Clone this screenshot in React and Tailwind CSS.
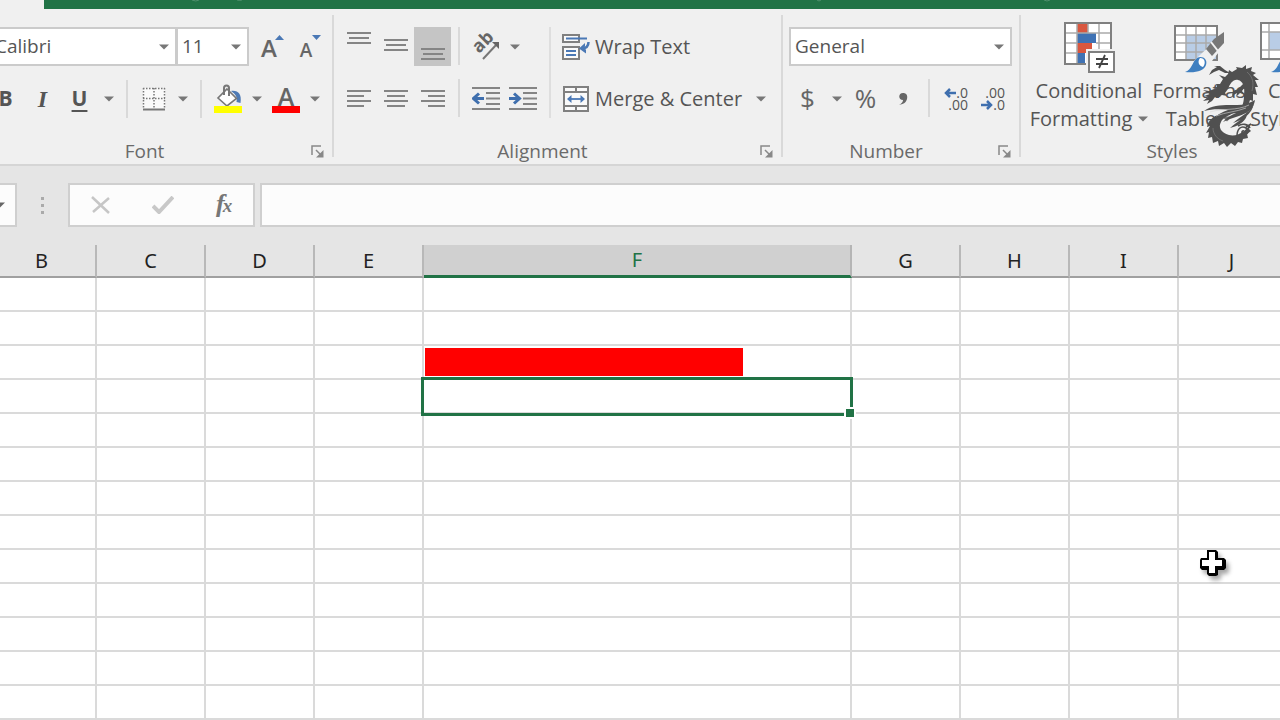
import React from 'react';

const Caret = () => (
  <svg width="10" height="6" viewBox="0 0 10 6" aria-hidden="true">
    <path d="M0 0.5h10L5 5.5z" fill="#777" />
  </svg>
);

const Divider = () => <div className="mx-[7px] h-[38px] w-[2px] shrink-0 bg-[#d9d9d9]" />;

const IconButton = ({ label, active, children }) => (
  <button
    type="button"
    aria-label={label}
    className={`flex h-[39px] w-[37px] shrink-0 items-center justify-center ${active ? 'bg-[#c5c5c5]' : ''}`}
  >
    {children}
  </button>
);

const CaretButton = ({ label }) => (
  <button type="button" aria-label={label} className="flex h-[39px] w-[21px] shrink-0 items-center justify-center">
    <Caret />
  </button>
);

const ComboBox = ({ label, value, className }) => (
  <div className={`relative h-[39px] border-2 border-[#cbcbcb] bg-white ${className}`}>
    <select
      aria-label={label}
      defaultValue={value}
      className="h-full w-full appearance-none bg-transparent pl-1 text-[19px] text-[#555] outline-none"
    >
      <option>{value}</option>
    </select>
    <span className="pointer-events-none absolute inset-y-0 right-[6px] flex items-center">
      <Caret />
    </span>
  </div>
);

const Lines = ({ rows }) => (
  <svg width="26" height="38" viewBox="0 0 26 38" stroke="#858585" strokeWidth="2">
    {rows.map(([x1, x2, y]) => (
      <path key={y} d={`M${x1} ${y}H${x2}`} />
    ))}
  </svg>
);

const verticalAligns = [
  { label: 'Top Align', rows: [[1, 25, 5], [3, 23, 10], [1, 25, 15]] },
  { label: 'Middle Align', rows: [[1, 25, 12], [3, 23, 17], [1, 25, 22]] },
  { label: 'Bottom Align', active: true, rows: [[1, 25, 21], [3, 23, 26], [1, 25, 31]] },
];

const horizontalAligns = [
  { label: 'Align Left', rows: [[1, 25, 11], [1, 18, 16], [1, 25, 21], [1, 18, 26]] },
  { label: 'Center', rows: [[1, 25, 11], [4, 22, 16], [1, 25, 21], [4, 22, 26]] },
  { label: 'Align Right', rows: [[1, 25, 11], [8, 25, 16], [1, 25, 21], [8, 25, 26]] },
];

const Launcher = () => (
  <svg width="13" height="13" viewBox="0 0 13 13" fill="none" stroke="#888" strokeWidth="1.5">
    <path d="M1 10V1h9" />
    <path d="M5 5l5 5" />
    <path d="M12.500 5v7.500H5z" fill="#888" stroke="none" />
  </svg>
);

const Group = ({ title, launcher, className, children }) => (
  <section className={`flex shrink-0 flex-col justify-between pb-px ${className}`}>
    {children}
    <div className="flex h-6 items-center">
      <h2 className="grow text-center text-[19px] leading-6 text-[#6a6a6a]">{title}</h2>
      {launcher && (
        <button type="button" aria-label={`${title} settings`} className="flex w-[30px] justify-center">
          <Launcher />
        </button>
      )}
    </div>
  </section>
);

const GroupDivider = () => <div className="mt-[6px] h-[142px] w-[2px] shrink-0 bg-[#d9d9d9]" />;

const BorderIcon = () => (
  <svg width="24" height="24" viewBox="0 0 24 24" fill="none" stroke="#777">
    <rect x="1" y="1" width="22" height="21" fill="#fafafa" stroke="none" />
    <path d="M1.500 1v21M12 1v21M22.500 1v21M1 1.500h22M1 11.500h22" strokeWidth="1.500" strokeDasharray="1.500 1.500" />
    <path d="M1 22.500h22" strokeWidth="2" />
  </svg>
);

const FillIcon = () => (
  <svg width="28" height="30" viewBox="0 0 28 30">
    <path d="M17 7c7-1 11 3 9.500 12l-4-1c1-5-1-8-5.500-11z" fill="#4f7bb5" />
    <path d="M13 5l9.500 9.500L13 22l-9-8z" fill="#fff" stroke="#777" strokeWidth="1.600" />
    <path d="M10 11V4q0-2.500 2.500-2.500T15 4v8" fill="none" stroke="#777" strokeWidth="2" />
    <rect x="0" y="22" width="28" height="7" fill="#ff0" />
  </svg>
);

const FontColorIcon = () => (
  <svg width="28" height="30" viewBox="0 0 28 30">
    <text x="14" y="22" textAnchor="middle" fontSize="25" fontWeight="600" fill="#666">A</text>
    <rect x="0" y="22" width="28" height="7" fill="red" />
  </svg>
);

const GrowFontIcon = () => (
  <svg width="28" height="28" viewBox="0 0 28 28" className="overflow-visible">
    <text x="11" y="24" textAnchor="middle" fontSize="24" fontWeight="600" fill="#666">A</text>
    <path d="M17 7l4.500-5 4.500 5z" fill="#4a78b5" />
  </svg>
);

const ShrinkFontIcon = () => (
  <svg width="28" height="28" viewBox="0 0 28 28" className="overflow-visible">
    <text x="11" y="24" textAnchor="middle" fontSize="19" fontWeight="600" fill="#666">A</text>
    <path d="M17 2h9l-4.500 5z" fill="#4a78b5" />
  </svg>
);

const OrientationIcon = () => (
  <svg width="30" height="30" viewBox="0 0 30 30" className="overflow-visible">
    <text x="0" y="0" transform="translate(8 22) rotate(-45)" fontSize="18" fontWeight="700" fill="#666">
      ab
    </text>
    <path d="M12 27L26 12" fill="none" stroke="#777" strokeWidth="2" />
    <path d="M21 10h7v7z" fill="#666" />
  </svg>
);

const IndentIcon = ({ increase }) => (
  <svg width="28" height="26" viewBox="0 0 28 26" fill="none">
    <path d="M0 2h28M14 7h14M14 12.500h14M14 18h14M0 23h28" stroke="#858585" strokeWidth="2" />
    <path
      d={increase ? 'M0 12.500h10M5 7.500l5.500 5-5.500 5' : 'M12 12.500H2M7 7.500l-5.500 5 5.500 5'}
      stroke="#3f6fae"
      strokeWidth="3"
    />
  </svg>
);

const WrapIcon = () => (
  <svg width="28" height="28" viewBox="0 0 28 28" fill="none">
    <path d="M1 2h16v7H1zM1 14h16v12H1z" stroke="#808080" strokeWidth="2" fill="#fafafa" />
    <path d="M4 5.500h21M4 18h10M4 22h10" stroke="#4a78b5" strokeWidth="1.800" />
    <path d="M26.500 9c0 5-3 6.500-7 6.500" stroke="#4a78b5" strokeWidth="2.500" />
    <path d="M23 10l-6 5.500 7 5v-4l-3-1 2-2z" fill="#4a78b5" />
  </svg>
);

const MergeIcon = () => (
  <svg width="28" height="28" viewBox="0 0 28 28" fill="none">
    <path d="M2 2h24v24H2zM2 7h24M2 21h24M14 2v5M14 21v5" stroke="#808080" strokeWidth="2" fill="#fafafa" />
    <path d="M6 14h16" stroke="#4a78b5" strokeWidth="1.800" />
    <path d="M9.500 10v8L5 14zM18.500 10v8l4.500-4z" fill="#4a78b5" />
  </svg>
);

const DecimalIcon = ({ increase }) => (
  <svg width="28" height="26" viewBox="0 0 28 26">
    <g fontSize="14" fill="#555">
      <text x="26" y="12" textAnchor="end">{increase ? '.0' : '.00'}</text>
      <text x="26" y="24" textAnchor="end">{increase ? '.00' : '.0'}</text>
    </g>
    <path
      d={increase ? 'M14 7H4M8 3L4 7l4 4' : 'M2 19h10M8 15l4 4-4 4'}
      fill="none"
      stroke="#3f6fae"
      strokeWidth="2.500"
    />
  </svg>
);

const ConditionalIcon = () => (
  <svg width="52" height="52" viewBox="0 0 52 52">
    <path d="M2 1h46v41H2z" fill="#fff" />
    <path d="M14 2h11v9H14zM14 21h15v10H14z" fill="#d9573f" />
    <path d="M14 11h19v10H14zM14 31h8v11h-8z" fill="#3f72b4" />
    <path d="M14 1v41M25 1v10M36 1v41M2 11h46M2 21h12M33 21h15M2 31h12M29 31h19" stroke="#aaa" strokeWidth="1.500" />
    <path d="M2 1h46v41H2z" fill="none" stroke="#808080" strokeWidth="2" />
    <path d="M23 27h30v25H23z" fill="#f0f0f0" />
    <path d="M26 30h25v20H26z" fill="#fff" stroke="#808080" strokeWidth="2" />
    <path d="M33 37h12M33 42h12M42 33l-6 13" stroke="#444" strokeWidth="1.800" />
  </svg>
);

const Brush = () => (
  <>
    <path d="M51 10L41 17 33 27l6 7 12-13z" fill="#777" />
    <path d="M38 20l7 9" stroke="#f0f0f0" strokeWidth="2" />
    <path d="M12 50c7-2 7-10 12-14 5-3 11 1 9 7-2 6-10 8-21 7z" fill="#3f7fc0" />
    <path d="M27 36c5 0 6 5 3 9-4-1-6-5-3-9z" fill="#fff" />
  </>
);

const FormatTableIcon = () => (
  <svg width="52" height="52" viewBox="0 0 52 52">
    <path d="M2 4h42v34H2z" fill="#fff" />
    <path d="M13 13h31v25H13z" fill="#b9cde6" />
    <path d="M13 4v34M23 4v34M33 4v34M2 13h42M2 21h42M2 30h42" stroke="#aaa" strokeWidth="1.500" />
    <path d="M2 4h42v34H2z" fill="none" stroke="#808080" strokeWidth="2" />
    <path d="M52 10L28 32 9 51h18l12-12 13-17z" fill="#f0f0f0" />
    <Brush />
  </svg>
);

const CellStylesIcon = () => (
  <svg width="52" height="52" viewBox="0 0 52 52">
    <path d="M2 1h42v36H2z" fill="#fff" />
    <path d="M10 10h25v18H10z" fill="#b9cde6" />
    <path d="M10 1v36M35 1v36M2 10h42M2 28h42" stroke="#aaa" strokeWidth="1.500" />
    <path d="M2 1h42v36H2z" fill="none" stroke="#808080" strokeWidth="2" />
    <Brush />
  </svg>
);

const StyleButton = ({ icon, lines, caret, className }) => (
  <button type="button" className={`flex shrink-0 flex-col items-center text-[20px] leading-7 text-[#555] ${className}`}>
    <span className="mb-[3px]">{icon}</span>
    <span className="whitespace-nowrap">{lines[0]}</span>
    <span className="flex items-center gap-[6px] whitespace-nowrap">
      {lines[1]}
      {caret && <Caret />}
    </span>
  </button>
);

const DragonLogo = () => (
  <svg width="64" height="90" viewBox="0 0 64 90" fill="#505050">
    {/* upper claw */}
    <path d="M9 13l3-5 5-3-3-1 6 0 5 4 5 3-5 0-6-3-5 2z" />
    {/* neck and arched back */}
    <path d="M13 31l4-6-1-3 4 0 3-5-4-4 6 2 3-3 1-4 3 2 5-3-1-2 6 1 4-3 0 4 6-2-1 4 5 2-3 2 6 5-4 0 3 7-3 0 2 8-4-1 0 7-3-1-2 6-3 0-6 5c4-5 5-10 5-16 1-8-1-14-6-15-5-1-8 4-10 9l-3 4 2 3-5-1-5 3z" />
    {/* head and claws */}
    <path d="M3 28l6 1 5-2 5 1-2 4 4 3-6 0-3 4-5 3 2-4-6 1 5-4-4-1 6-2zM33 29l5-2 6-6 1 4-3 4 2 3-4-1-4 4 1-4-5 3z" />
    {/* swept mane */}
    <path d="M4 49c9-7 22-6 33-6 7 0 13-2 18-5-1 6-4 10-9 13-7 4-16 5-23 9 3-4 8-7 13-9-9 1-17 3-24 7 4-5 10-8 16-10-8-1-16-1-24 1z" />
    <path d="M54 41c-3 9-12 12-21 20 9-3 19-8 21-20zM47 48c-1 8-9 11-17 18 9-2 19-8 17-18z" />
    {/* coiled tail */}
    <path d="M26 51c-11 1-18 7-19 14l3-1-4 7 3-1-1 6 4-1 1 6 5-2 1 5 5-3 3 4 4-4 4 3 3-4 4 1 1-4 5-1-1-4 4-3-2-2 2-6c-5 8-13 14-22 12-8-2-11-8-8-13 2-5 8-6 12-9z" />
    <path d="M37 74c0-7 4-11 9-8 4 3 1 8-3 6-2-1-1-4 1-3M38 64c4-3 10-2 12 2M46 65l5-3" fill="none" stroke="#505050" strokeWidth="1.600" />
    <path d="M10 50c13-4 27-1 39-7M16 54c10-4 20-4 30-8" fill="none" stroke="#d8d8d8" strokeWidth="0.600" />
    <path d="M47 10c6 5 7 11 5 19M13 66c0 6 4 11 10 13" fill="none" stroke="#858585" strokeWidth="0.600" />
  </svg>
);

const PlusCursor = () => (
  <svg width="32" height="34" viewBox="0 0 32 34" className="overflow-visible drop-shadow-[3px_4px_2px_rgba(0,0,0,0.35)]">
    <path d="M8 2h9l2 2v6h6l2 2v8l-2 2h-6v5l-2 1h-7l-2-2v-4H3l-2-2v-8l1-2h6z" fill="#000" />
    <path d="M10 4h6v8h7v6h-7v7h-6v-7H3v-6h7z" fill="#fff" />
  </svg>
);

const Ribbon = () => (
  <div className="flex h-[157px] border-b-2 border-[#d5d5d5] bg-[#f0f0f0]">
    <Group title="Font" launcher className="-ml-[13px] w-[345px] pt-[18px]">
      <div className="flex flex-col gap-[13px]">
        <div className="flex">
          <ComboBox label="Font name" value="Calibri" className="w-[190px] pl-[2px]" />
          <ComboBox label="Font size" value="11" className="-ml-px mr-1 w-[73px]" />
          <IconButton label="Increase Font Size"><GrowFontIcon /></IconButton>
          <IconButton label="Decrease Font Size"><ShrinkFontIcon /></IconButton>
        </div>
        <div className="flex items-center text-[21px] text-[#555]">
          <IconButton label="Bold"><span className="font-bold">B</span></IconButton>
          <IconButton label="Italic"><span className="font-['Liberation_Serif',serif] text-[24px] font-bold italic">I</span></IconButton>
          <IconButton label="Underline"><span className="font-bold underline decoration-2 underline-offset-4">U</span></IconButton>
          <CaretButton label="Underline options" />
          <Divider />
          <IconButton label="Borders"><BorderIcon /></IconButton>
          <CaretButton label="Border options" />
          <Divider />
          <IconButton label="Fill Color"><FillIcon /></IconButton>
          <CaretButton label="Fill options" />
          <IconButton label="Font Color"><FontColorIcon /></IconButton>
          <CaretButton label="Font color options" />
        </div>
      </div>
    </Group>
    <GroupDivider />
    <Group title="Alignment" launcher className="w-[447px] pt-[18px]">
      <div className="flex pl-[6px]">
        <div className="flex flex-col gap-[13px]">
          <div className="flex">
            {verticalAligns.map(({ label, active, rows }) => (
              <IconButton key={label} label={label} active={active}><Lines rows={rows} /></IconButton>
            ))}
            <Divider />
            <IconButton label="Orientation"><OrientationIcon /></IconButton>
            <CaretButton label="Orientation options" />
          </div>
          <div className="flex">
            {horizontalAligns.map(({ label, rows }) => (
              <IconButton key={label} label={label}><Lines rows={rows} /></IconButton>
            ))}
            <Divider />
            <IconButton label="Decrease Indent"><IndentIcon /></IconButton>
            <IconButton label="Increase Indent"><IndentIcon increase /></IconButton>
          </div>
        </div>
        <div className="ml-2 w-[2px] bg-[#dedede]" />
        <div className="ml-[11px] flex flex-col gap-[13px] text-[20px] text-[#555]">
          <button type="button" className="flex h-[39px] items-center gap-[5px]">
            <WrapIcon />
            Wrap Text
          </button>
          <div className="flex items-center gap-2">
            <button type="button" className="flex h-[39px] items-center gap-[5px] whitespace-nowrap">
              <MergeIcon />
              Merge &amp; Center
            </button>
            <CaretButton label="Merge options" />
          </div>
        </div>
      </div>
    </Group>
    <GroupDivider />
    <Group title="Number" launcher className="w-[236px] pt-[18px]">
      <div className="flex flex-col gap-[13px] pl-[6px]">
        <ComboBox label="Number format" value="General" className="w-[223px]" />
        <div className="flex text-[26px] text-[#666]">
          <IconButton label="Accounting Number Format">$</IconButton>
          <CaretButton label="Currency options" />
          <IconButton label="Percent Style">%</IconButton>
          <IconButton label="Comma Style">
            <svg width="12" height="16" viewBox="0 0 12 16">
              <path d="M6 2c3 0 5 2 4 6-1 4-4 5-8 6 3-2 4-3 4-5-5 0-5-7 0-7z" fill="#666" />
            </svg>
          </IconButton>
          <Divider />
          <IconButton label="Increase Decimal"><DecimalIcon increase /></IconButton>
          <IconButton label="Decrease Decimal"><DecimalIcon /></IconButton>
        </div>
      </div>
    </Group>
    <GroupDivider />
    <Group title="Styles" className="-mr-[43px] grow pt-[13px]">
      <div className="flex pl-[6px]">
        <StyleButton icon={<ConditionalIcon />} lines={['Conditional', 'Formatting']} caret className="w-[124px]" />
        <StyleButton icon={<FormatTableIcon />} lines={['Format as', 'Table']} caret className="w-[96px]" />
        <StyleButton icon={<CellStylesIcon />} lines={['Cell', 'Styles']} caret className="w-[76px]" />
      </div>
    </Group>
  </div>
);

const FormulaBar = () => (
  <div className="flex h-[79px] items-start bg-[#e5e5e5] pt-[17px]">
    <button type="button" aria-label="Name Box" className="flex h-11 w-[17px] items-center border-2 border-l-0 border-[#cfcfcf] bg-[#fcfcfc]">
      <svg width="5" height="6" viewBox="5 0 5 6"><path d="M0 0.500h10L5 5.500z" fill="#666" /></svg>
    </button>
    <svg width="51" height="44" viewBox="0 0 51 44" fill="#aaa">
      <path d="M24 14h3v3h-3zM24 21h3v3h-3zM24 28h3v3h-3z" />
    </svg>
    <div className="flex h-11 w-[187px] items-center justify-around border-2 border-[#cfcfcf] bg-[#fcfcfc]">
      <button type="button" aria-label="Cancel">
        <svg width="20" height="18" viewBox="0 0 20 18"><path d="M1 1l17 16M18 2L2 16" stroke="#c6c6c6" strokeWidth="2.500" /></svg>
      </button>
      <button type="button" aria-label="Enter">
        <svg width="22" height="18" viewBox="0 0 22 18"><path d="M1 10l6 6L21 1" fill="none" stroke="#c8c8c8" strokeWidth="4" /></svg>
      </button>
      <button type="button" aria-label="Insert Function" className="flex items-baseline font-['Liberation_Serif',serif] text-[26px] leading-8 font-bold text-[#777] italic">
        f<span className="-ml-[2px] text-[19px]">x</span>
      </button>
    </div>
    <input aria-label="Formula" className="ml-[5px] h-11 min-w-0 grow border-2 border-r-0 border-[#cfcfcf] bg-[#fcfcfc] px-2 outline-none" />
  </div>
);

const columns = ['B', 'C', 'D', 'E', 'F', 'G', 'H', 'I', 'J'];
const rowCount = 13;

const Cell = ({ column, row }) => {
  if (column === 'F' && row === 3) {
    return <div className="ml-px h-7 w-[318px] bg-[#ff0000]" />;
  }
  if (column === 'F' && row === 4) {
    return (
      <div className="absolute -top-[3px] -right-[3px] -bottom-[4px] -left-[3px] z-10 border-[3px] border-[#217346]">
        <span className="absolute -right-[6px] -bottom-[6px] h-3 w-3 border-2 border-white bg-[#217346]" />
      </div>
    );
  }
  return null;
};

const Sheet = () => (
  <table className="-ml-3 w-[calc(100%+18px)] table-fixed border-separate border-spacing-0 bg-white font-['Noto_Sans',sans-serif]">
    <thead>
      <tr className="h-[33px]">
        {columns.map((column) => (
          <th
            key={column}
            scope="col"
            className={
              column === 'F'
                ? 'w-[428px] border-r-2 border-b-3 border-r-[#b5b5b5] border-b-[#217346] bg-[#d0d0d0] p-0 text-[20px] leading-7 font-normal text-[#217346]'
                : `${column === 'J' ? '' : 'w-[109px]'} border-r-2 border-b-2 border-r-[#b8b8b8] border-b-[#a0a0a0] bg-[#e5e5e5] p-0 text-[20px] leading-7 font-normal text-[#222]`
            }
          >
            {column}
          </th>
        ))}
      </tr>
    </thead>
    <tbody>
      {Array.from({ length: rowCount }, (_, index) => (
        <tr key={index} className="h-[34px]">
          {columns.map((column) => (
            <td key={column} className="relative border-r-2 border-b-2 border-[#dadada] p-0">
              <Cell column={column} row={index + 1} />
            </td>
          ))}
        </tr>
      ))}
    </tbody>
  </table>
);

const App = () => (
  <div className="relative min-h-screen overflow-hidden bg-white font-['Open_Sans','Noto_Sans',sans-serif]">
    <div className="flex h-[9px] bg-[#217346]">
      <div className="w-11 bg-[#f0f0f0]" />
      <svg width="1010" height="3" viewBox="0 0 1010 3" fill="none" stroke="#4f8f6c">
        <path d="M148 0q4 2 7 0M193 0q3 1 5 0M773 0q2 2 4 0M1000 0q3 2 6 0" />
      </svg>
    </div>
    <Ribbon />
    <FormulaBar />
    <Sheet />
    <div className="pointer-events-none absolute top-[62px] right-[16px]">
      <DragonLogo />
    </div>
    <div className="pointer-events-none absolute top-[548px] left-[1199px]">
      <PlusCursor />
    </div>
  </div>
);

export default App;
